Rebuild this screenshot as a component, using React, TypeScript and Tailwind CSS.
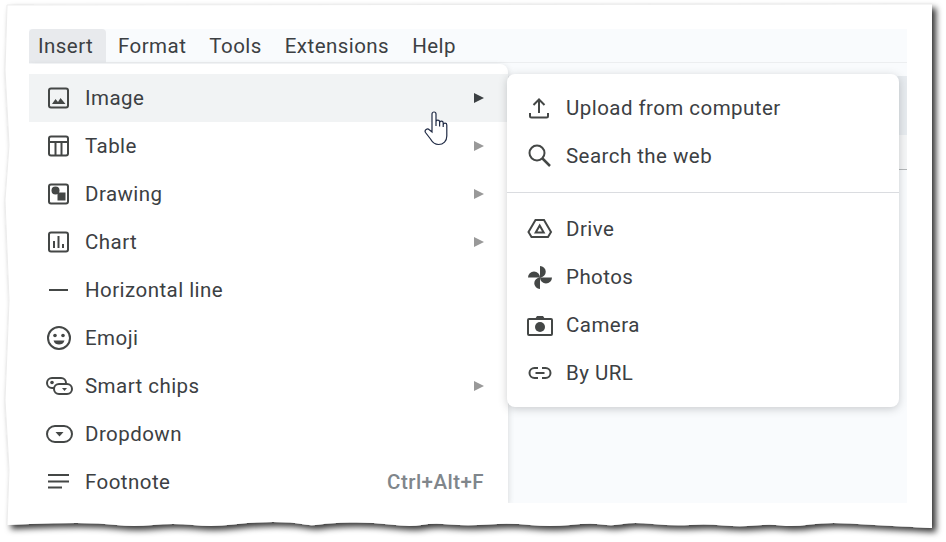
import type { ReactNode } from 'react';

// rough outline of the torn bottom edge, smoothed into curves below
const bottomPoints = [
    [932, 528], [873, 525], [827, 522], [793, 527], [770, 524], [740, 527], [707, 524], [673, 526],
    [633, 522], [613, 526], [590, 523], [550, 527], [510, 523], [467, 526], [433, 523], [410, 527],
    [370, 522], [330, 523], [310, 526], [293, 522], [253, 522], [213, 527], [173, 523], [133, 527],
    [100, 523], [53, 523], [7, 525],
];

function smooth(points: number[][]) {
    let d = '';
    for (let i = 0; i < points.length - 1; i++) {
        const [x, y] = points[i];
        const [nx, ny] = points[i + 1];
        d += ` Q${ x },${ y } ${ (x + nx) / 2 },${ (y + ny) / 2 }`;
    }
    return d;
}

const leftEdge = 'L9,470 L5,400 L9,300 L5,200 L9,145 L5,70 L7,5';
const edge = `M7,5 L932,4 L932,528${ smooth(bottomPoints) } L7,525 ${ leftEdge } Z`;

function Ico({ children }: { children: ReactNode }) {
    return (
        <svg viewBox="0 0 24 24" className="h-6 w-6 shrink-0 overflow-visible fill-none stroke-[#444746] stroke-2">
            { children }
        </svg>
    );
}

const icons: Record<string, ReactNode> = {
    image: <Ico><rect x="2" y="2.500" width="19" height="19" rx="2" /><path d="M5 18l3.500-5 2.500 3 2.500-4 5 6z" fill="#444746" stroke="none" /></Ico>,
    table: <Ico><rect x="2" y="2.500" width="19" height="19" rx="2" /><path d="M2 8h19M8.500 8v14M14.500 8v14" /></Ico>,
    drawing: <Ico><rect x="2" y="2.500" width="19" height="19" rx="2" /><circle cx="8.500" cy="8.500" r="4" fill="#444746" stroke="none" /><rect x="10.500" y="10.500" width="8" height="8" fill="#444746" stroke="none" /></Ico>,
    chart: <Ico><rect x="2" y="2.500" width="19" height="19" rx="2" /><path d="M7 11v7M11.500 6v12M16 14v4" /></Ico>,
    line: <Ico><path d="M2 12h19" /></Ico>,
    emoji: <Ico><circle cx="12" cy="12" r="11" /><circle cx="8" cy="9.500" r="1.800" fill="#444746" stroke="none" /><circle cx="16" cy="9.500" r="1.800" fill="#444746" stroke="none" /><path d="M6.500 14.500h11c-1 3-3 4-5.500 4s-4.500-1-5.500-4z" fill="#444746" stroke="none" /></Ico>,
    chips: <Ico><rect x="0" y="4" width="19" height="10" rx="5" /><rect x="7" y="10" width="18" height="10" rx="5" fill="#fff" /><circle cx="5" cy="8.500" r="1.800" fill="#444746" stroke="none" /><path d="M15 14h5l-2.500 3z" fill="#444746" stroke="none" /></Ico>,
    dropdown: <Ico><rect x="0" y="4" width="25" height="16" rx="8" /><path d="M8.500 10h8l-4 4.500z" fill="#444746" stroke="none" /></Ico>,
    footnote: <Ico><path d="M1 5h21M1 11.500h21M1 17.500h14" /></Ico>,
    upload: <Ico><path d="M11 17V3.500M5.500 9L11 3.500 16.500 9M2 17v3a1.500 1.500 0 0 0 1.500 1.500h15A1.500 1.500 0 0 0 20 20v-3" /></Ico>,
    search: <Ico><circle cx="9" cy="9" r="7.500" /><path d="M14.500 14.500L22 22" strokeWidth="2.500" /></Ico>,
    drive: <Ico><path d="M7.500 3h8.500l7 12-3 5H3.500L0.500 15z" /><path d="M11.700 8.500l4 7h-8z" /></Ico>,
    photos: <Ico><path d="M12 12.500V1a5.750 5.750 0 0 1 0 11.500zM12 12.500h12a6 6 0 0 1-12 0zM12 12.500V24a5.750 5.750 0 0 1 0-11.500zM12 12.500H0a6 6 0 0 1 12 0z" fill="#444746" stroke="none" /></Ico>,
    camera: <Ico><path d="M1 6h22a1 1 0 0 1 1 1v14a1 1 0 0 1-1 1H1a1 1 0 0 1-1-1V7a1 1 0 0 1 1-1z" /><path d="M7 6l2-3h6l2 3z" fill="#444746" stroke="none" /><circle cx="12" cy="14" r="5" fill="#444746" stroke="none" /></Ico>,
    link: <Ico><path d="M10 7H6.500a5 5 0 0 0 0 10H10M14 7h3.500a5 5 0 0 1 0 10H14M7.500 12h9" /></Ico>,
};

const mainItems = [
    { label: 'Image', icon: 'image', arrow: true, active: true },
    { label: 'Table', icon: 'table', arrow: true },
    { label: 'Drawing', icon: 'drawing', arrow: true },
    { label: 'Chart', icon: 'chart', arrow: true },
    { label: 'Horizontal line', icon: 'line' },
    { label: 'Emoji', icon: 'emoji' },
    { label: 'Smart chips', icon: 'chips', arrow: true },
    { label: 'Dropdown', icon: 'dropdown' },
    { label: 'Footnote', icon: 'footnote', shortcut: 'Ctrl+Alt+F' },
];

const tabs = ['Format', 'Tools', 'Extensions', 'Help'];

function SubItem({ icon, label }: { icon: string; label: string }) {
    return (
        <div className="flex h-12 items-center gap-[14px] pl-[21px]">
            { icons[icon] }
            <span>{ label }</span>
        </div>
    );
}

export default function App() {
    return (
        <div className="relative h-[542px] w-[946px] overflow-hidden bg-white pl-[29px] pt-[29px] font-['Roboto',sans-serif] text-[20.5px] leading-[30px] tracking-[0.45px] text-[#3c4043]">
            { /* torn paper edge */ }
            <svg viewBox="0 0 946 542" className="absolute inset-0 h-full w-full">
                <defs>
                    <filter id="torn" x="-5%" y="-5%" width="110%" height="110%">
                        <feDropShadow dx="4" dy="4" stdDeviation="3" floodColor="#000" floodOpacity="0.8" />
                    </filter>
                </defs>
                <path d={ edge } fill="#fff" filter="url(#torn)" />
                <path d={ `M932,4 L7,5 L5,70 L9,145 L5,200 L9,300 L5,400 L9,470 L7,525` } fill="none" stroke="#ececec" />
            </svg>

            <div className="relative flex h-[474px] w-[878px] flex-col overflow-hidden bg-[#f9fbfd]">
                <div className="flex h-[34px] shrink-0 items-center border-b border-[#eceef0]">
                    <div className="flex h-[34px] w-[77px] items-center rounded-t-[4px] bg-[#e8eaed] pl-[9px]">Insert</div>
                    <div className="flex gap-[23px] pl-[12px]">
                        { tabs.map((t) => <span key={ t }>{ t }</span>) }
                    </div>
                </div>
                <div className="mt-[13px] h-[59px] shrink-0 bg-[#e7ebef]" />
                <div className="h-[35px] shrink-0 border-b border-[#b5b8ba] bg-[#f5f6f7]" />

                { /* Insert menu */ }
                <div className="absolute left-0 top-[35px] h-[439px] w-[479px] overflow-hidden rounded-tr-[8px] bg-white pt-[10px] shadow-[0_2px_6px_rgba(60,64,67,0.2)]">
                    { mainItems.map((item) => (
                        <div key={ item.label } className={ 'flex h-12 items-center gap-[14px] pl-[18px] pr-[24px] ' + (item.active ? 'bg-[#f1f3f4]' : '') }>
                            { icons[item.icon] }
                            <span className="flex-1">{ item.label }</span>
                            { item.arrow && <span className={ 'h-0 w-0 border-y-[5.5px] border-l-[10px] border-y-transparent ' + (item.active ? 'border-l-[#3c4043]' : 'border-l-[#999]') } /> }
                            { item.shortcut && <span className="font-medium text-[#80868b]">{ item.shortcut }</span> }
                        </div>
                    )) }
                </div>

                { /* Image submenu */ }
                <div className="absolute left-[478px] top-[45px] w-[392px] rounded-[8px] bg-white py-[10px] shadow-[0_2px_8px_rgba(60,64,67,0.25)]">
                    <SubItem icon="upload" label="Upload from computer" />
                    <SubItem icon="search" label="Search the web" />
                    <div className="my-[12px] border-t border-[#dadce0]" />
                    <SubItem icon="drive" label="Drive" />
                    <SubItem icon="photos" label="Photos" />
                    <SubItem icon="camera" label="Camera" />
                    <SubItem icon="link" label="By URL" />
                </div>

                { /* mouse pointer */ }
                <svg viewBox="0 0 27 35" className="absolute left-[395px] top-[82px] h-[35px] w-[27px] fill-white stroke-[#1f2a44] stroke-[1.200]">
                    <path d="M8 21V3a2 2 0 0 1 4 0V15V11a1.800 1.800 0 0 1 3.600 0V15.500V12a1.800 1.800 0 0 1 3.600 0V16V14a1.800 1.800 0 0 1 3.600 0V25c0 5-3.300 8.500-8.300 8.500-4 0-6-2-8-5.500L1.500 21.500c-1.500-2.500 2-4.500 3.500-3z" />
                </svg>
            </div>
        </div>
    );
}
